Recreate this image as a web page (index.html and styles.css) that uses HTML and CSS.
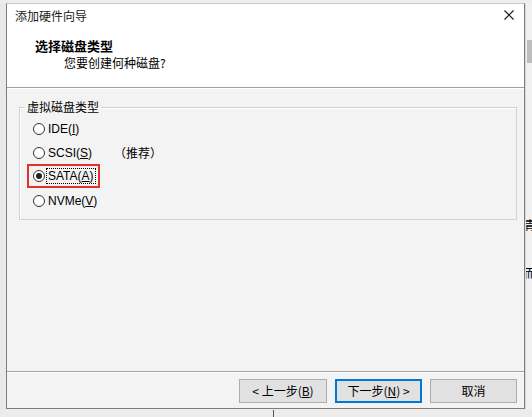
FILE: index.html
```html
<!DOCTYPE html>
<html lang="zh-CN">
<head>
<meta charset="utf-8">
<title>添加硬件向导</title>
<link rel="stylesheet" href="styles.css">
</head>
<body>
<div class="screen">
  <div class="top">
    <div class="left-strip"></div>
    <div class="dialog">
      <div class="head">
        <div class="titlebar">
          <span class="title">添加硬件向导</span>
          <svg class="close" width="10" height="10" viewBox="0 0 10 10"><path d="M0.5 0.5 L9.5 9.5 M9.5 0.5 L0.5 9.5" stroke="#111" stroke-width="1.1" fill="none"/></svg>
        </div>
        <div class="heading">选择磁盘类型</div>
        <div class="subtitle">您要创建何种磁盘?</div>
      </div>
      <div class="main">
        <fieldset class="group">
          <legend>虚拟磁盘类型</legend>
          <div class="opt"><span class="radio"></span><span class="lbl">IDE(<u>I</u>)</span></div>
          <div class="opt"><span class="radio"></span><span class="lbl lbl-wide">SCSI(<u>S</u>)</span><span class="note">（推荐）</span></div>
          <div class="opt"><span class="hl"><span class="radio checked"></span><span class="lbl focus">SATA(<u>A</u>)</span></span></div>
          <div class="opt"><span class="radio"></span><span class="lbl">NVMe(<u>V</u>)</span></div>
        </fieldset>
      </div>
      <div class="footer">
        <button class="btn btn-prev">&lt; 上一步(<u>B</u>)</button>
        <button class="btn btn-default">下一步(<u>N</u>) &gt;</button>
        <button class="btn">取消</button>
      </div>
    </div>
    <div class="right-strip">
      <div class="thumb"></div>
      <div class="frag frag1">青</div>
      <div class="frag frag2">而</div>
    </div>
  </div>
  <div class="bottom-strip"><div class="vline"></div></div>
</div>
</body>
</html>
```
FILE: styles.css
```css
html, body {
  margin: 0;
  padding: 0;
}
body {
  width: 532px;
  height: 417px;
  overflow: hidden;
  background: #ededed;
  font-family: "Liberation Sans", "Noto Sans CJK SC", sans-serif;
  font-size: 12px;
  color: #000;
}
.screen {
  display: flex;
  flex-direction: column;
  width: 532px;
  height: 417px;
  padding-top: 3px;
  box-sizing: border-box;
}
.top {
  display: flex;
  height: 406px;
}
.left-strip {
  width: 6px;
  background: #e9e9e9;
}
.dialog {
  width: 519px;
  height: 406px;
  box-sizing: border-box;
  border: 1px solid #7d7d7d;
  border-top-color: #c9c9c9;
  background: #f3f3f3;
  display: flex;
  flex-direction: column;
}
.head {
  height: 83px;
  background: #fff;
  border-bottom: 1px solid #a0a0a0;
}
.titlebar {
  height: 24px;
  display: flex;
  align-items: center;
  justify-content: space-between;
  padding: 0 10px 0 8px;
}
.title {
  font-family: "Noto Sans CJK SC", sans-serif;
  font-size: 12px;
  line-height: 14px;
  color: #1a1a1a;
}
.close {
  display: block;
  margin-top: -2px;
}
.heading {
  margin-top: 10px;
  padding-left: 28px;
  font-family: "Noto Sans CJK SC", sans-serif;
  font-weight: bold;
  font-size: 13px;
  line-height: 16px;
}
.subtitle {
  padding-left: 57px;
  margin-top: 1px;
  font-family: "Noto Sans CJK SC", sans-serif;
  font-size: 12px;
  line-height: 16px;
}
.main {
  flex: 1;
  border-top: 1px solid #fff;
  padding: 11px 7px 0 12px;
}
.group {
  margin: 0;
  padding: 0 0 6px 0;
  border: 1px solid #d2d2d2;
  box-shadow: inset 1px 1px 0 #fff;
  min-width: 0;
}
.group legend {
  margin-left: 5px;
  padding: 0 2px;
  font-family: "Noto Sans CJK SC", sans-serif;
  font-size: 12px;
  line-height: 14px;
}
.opt {
  height: 24px;
  display: flex;
  align-items: center;
  padding-left: 13px;
}
.group legend + .opt {
  margin-top: 3px;
}
.radio {
  width: 12px;
  height: 12px;
  box-sizing: border-box;
  border: 1px solid #333;
  border-radius: 50%;
  background: #fff;
  flex: none;
  display: flex;
  align-items: center;
  justify-content: center;
}
.radio.checked::after {
  content: "";
  width: 6px;
  height: 6px;
  border-radius: 50%;
  background: #222;
}
.lbl {
  margin-left: 2px;
  padding: 0 1px;
  line-height: 14px;
}
.lbl-wide {
  width: 65px;
}
.note {
  font-family: "Noto Sans CJK SC", sans-serif;
  line-height: 14px;
}
.hl {
  display: inline-flex;
  align-items: center;
  height: 24px;
  box-sizing: border-box;
  margin-left: -6px;
  margin-top: -2px;
  border: 2px solid #e2322c;
  padding: 0 3px 0 4px;
}
.focus {
  outline: 1px dotted #000;
  outline-offset: 0;
}
.footer {
  height: 37px;
  border-top: 1px solid #a0a0a0;
  box-shadow: inset 0 1px 0 #fff;
  display: flex;
  justify-content: flex-end;
  align-items: flex-start;
  gap: 8px;
  padding: 7px 7px 0 0;
  box-sizing: border-box;
}
.btn {
  width: 87px;
  height: 24px;
  margin: 0;
  padding: 0;
  border: 1px solid #adadad;
  background: #e1e1e1;
  font-family: "Noto Sans CJK SC", sans-serif;
  font-size: 12px;
  line-height: 14px;
  color: #000;
}
.btn-prev {
  width: 88px;
}
.btn-default {
  border: 1px solid #0078d7;
  box-shadow: inset 0 0 0 1px #0078d7;
}
.right-strip {
  width: 7px;
  background: #f0f0f0;
  border-left: 1px solid #d8d8d8;
  box-sizing: border-box;
  display: flex;
  flex-direction: column;
  overflow: hidden;
}
.thumb {
  margin-top: 37px;
  margin-left: 1px;
  height: 23px;
  background: #bdbdbd;
}
.frag {
  font-family: "Noto Sans CJK SC", sans-serif;
  font-size: 12px;
  line-height: 14px;
  margin-left: -2px;
  white-space: nowrap;
}
.frag1 {
  margin-top: 155px;
}
.frag2 {
  margin-top: 34px;
}
.bottom-strip {
  flex: 1;
  background: #ececec;
  padding-left: 273px;
  padding-top: 1px;
}
.vline {
  width: 1px;
  height: 100%;
  background: #555;
}
```
